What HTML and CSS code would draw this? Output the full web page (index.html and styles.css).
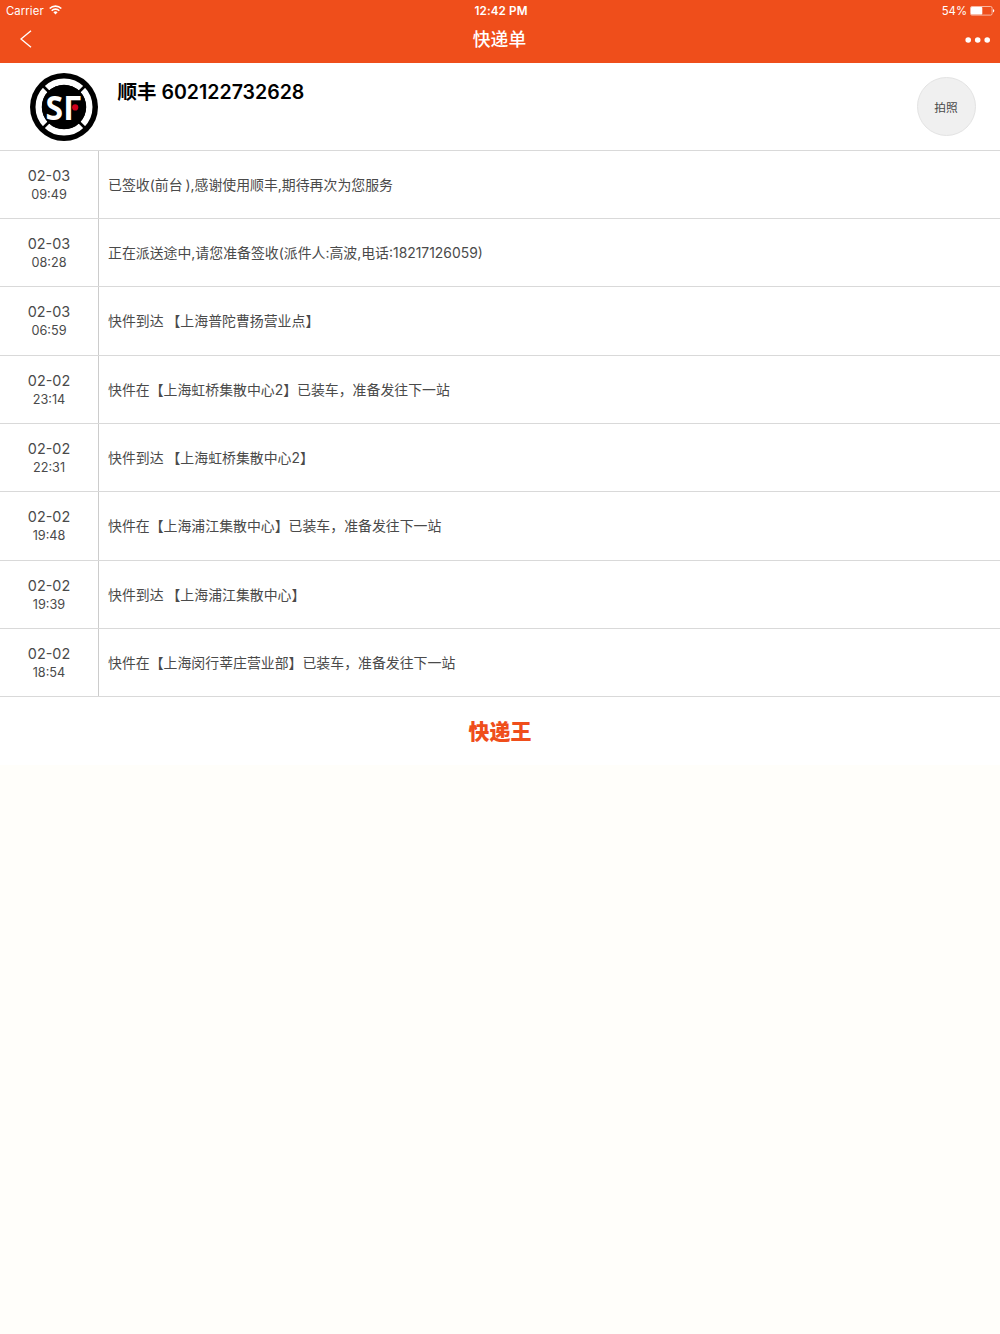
FILE: index.html
```html
<!DOCTYPE html>
<html lang="zh-CN">
<head>
<meta charset="utf-8">
<meta name="viewport" content="width=device-width,initial-scale=1.0">
<title>快递单</title>
<link rel="stylesheet" href="styles.css">
</head>
<body>
    <header class="header">
        <div class="status">
            <div class="carrier">
                <span>Carrier</span>
                <svg class="wifi" width="13" height="10" viewBox="0 0 13 10" fill="none" stroke="#fff" stroke-width="1.6">
                    <path d="M.7 3.5a8.2 8.2 0 0 1 11.6 0M2.7 5.7a5.4 5.4 0 0 1 7.6 0"/>
                    <path d="M6.5 9.4 4.4 7.3a3 3 0 0 1 4.2 0z" fill="#fff" stroke="none"/>
                </svg>
            </div>
            <div class="clock">12:42 PM</div>
            <div class="power">
                <span>54%</span>
                <svg width="25" height="10" viewBox="0 0 25 10">
                    <rect x=".5" y=".5" width="21.6" height="8.6" rx="1.5" fill="none" stroke="#fff" stroke-opacity=".75" stroke-width=".8"/>
                    <rect x="1" y="1" width="11.3" height="7.6" rx=".8" fill="#fff"/>
                    <path d="M23 3v3.6q1.3-.5 1.3-1.8T23 3z" fill="#fff"/>
                </svg>
            </div>
        </div>
        <nav class="nav">
            <a class="back" href="#">
                <svg width="12" height="18" viewBox="0 0 12 18" fill="none" stroke="#fff" stroke-width="1.4">
                    <path d="M11 .8 1 9l10 8.2"/>
                </svg>
            </a>
            <h1>快递单</h1>
            <a class="more" href="#">
                <svg width="26" height="6" viewBox="0 0 26 6" fill="#fff">
                    <circle cx="3.2" cy="3" r="2.8"/>
                    <circle cx="12.7" cy="3" r="2.8"/>
                    <circle cx="22.2" cy="3" r="2.8"/>
                </svg>
            </a>
        </nav>
    </header>

    <div class="main">
        <div class="express">
            <svg class="logo" width="68" height="68" viewBox="0 0 68 68">
                <circle cx="34" cy="34" r="34" fill="#000"/>
                <circle cx="34" cy="34" r="25.3" fill="none" stroke="#fff" stroke-width="6.4"/>
                <path d="M12 12l44 44M56 12 12 56" stroke="#000" stroke-width="2.6"/>
                <circle cx="34" cy="34" r="22.2" fill="#000"/>
                <text class="logo-text" x="15.6" y="46.6" textLength="35.4" lengthAdjust="spacingAndGlyphs">SΓ</text>
                <circle cx="45.2" cy="34.4" r="3.1" fill="#d0021b"/>
            </svg>
            <h2>顺丰 602122732628</h2>
            <button class="photo">拍照</button>
        </div>

        <ul class="track">
            <li><div class="time"><b>02-03</b><span>09:49</span></div><p>已签收(前台 ),感谢使用顺丰,期待再次为您服务</p></li>
            <li><div class="time"><b>02-03</b><span>08:28</span></div><p>正在派送途中,请您准备签收(派件人:高波,电话:18217126059)</p></li>
            <li><div class="time"><b>02-03</b><span>06:59</span></div><p>快件到达 【上海普陀曹扬营业点】</p></li>
            <li><div class="time"><b>02-02</b><span>23:14</span></div><p>快件在【上海虹桥集散中心2】已装车，准备发往下一站</p></li>
            <li><div class="time"><b>02-02</b><span>22:31</span></div><p>快件到达 【上海虹桥集散中心2】</p></li>
            <li><div class="time"><b>02-02</b><span>19:48</span></div><p>快件在【上海浦江集散中心】已装车，准备发往下一站</p></li>
            <li><div class="time"><b>02-02</b><span>19:39</span></div><p>快件到达 【上海浦江集散中心】</p></li>
            <li><div class="time"><b>02-02</b><span>18:54</span></div><p>快件在【上海闵行莘庄营业部】已装车，准备发往下一站</p></li>
        </ul>

        <div class="brand">快递王</div>
    </div>
</body>
</html>
```

FILE: styles.css
```css
* {
    box-sizing: border-box;
    margin: 0;
    padding: 0;
}
body {
    background-color: #fffefa;
    font-family: Inter, "Noto Sans CJK SC", sans-serif;
    color: #4a4a4a;
}
.header {
    height: 62.5px;
    background-color: #ef4e1b;
    color: #fff;
}
.status {
    display: grid;
    grid-template-columns: 1fr auto 1fr;
    align-items: center;
    height: 20px;
    padding: 0 5px 0 6px;
    font-size: 11.3px;
    line-height: 22px;
}
.carrier, .power {
    display: flex;
    align-items: center;
    gap: 5px;
}
.carrier {
    letter-spacing: .1px;
}
.wifi {
    margin-bottom: 2px;
}
.power {
    justify-content: flex-end;
    gap: 3px;
}
.power svg {
    margin-bottom: 1px;
}
.clock {
    padding-left: 1px;
    font-size: 11.7px;
    font-weight: 600;
    letter-spacing: .1px;
}
.nav {
    display: grid;
    grid-template-columns: 1fr auto 1fr;
    align-items: center;
    height: 38px;
    padding: 0 9px 0 20px;
}
.nav h1 {
    padding-right: 12px;
    font-size: 17.8px;
    font-weight: 500;
    line-height: 40px;
}
.back, .more {
    display: flex;
}
.back {
    padding-bottom: 3px;
}
.more {
    justify-content: flex-end;
    padding-bottom: 1px;
}
.main {
    height: 702.5px;
    background-color: #fff;
}
.express {
    display: flex;
    height: 88px;
    padding: 10px 24.5px 0 29.5px;
    border-bottom: 1px solid #d9d9d9;
}
.logo-text {
    font-family: "Open Sans", sans-serif;
    font-size: 34px;
    font-weight: 700;
    fill: #fff;
}
.express h2 {
    flex: 1;
    margin-left: 20px;
    color: #000;
    font-size: 19.55px;
    font-weight: 600;
    line-height: 39px;
}
.photo {
    width: 59px;
    height: 59px;
    margin-top: 4px;
    border: 1px solid #e3e3e3;
    border-radius: 50%;
    background-color: #f0f0f0;
    color: #4a4a4a;
    font-family: inherit;
    font-size: 11.7px;
}
.track {
    list-style: none;
}
.track li {
    display: flex;
    height: 68.36px;
    border-bottom: 1px solid #d9d9d9;
}
.time {
    display: flex;
    flex-direction: column;
    justify-content: center;
    width: 99px;
    padding-top: 1px;
    border-right: 1px solid #ccc;
    text-align: center;
}
.time b {
    font-size: 14.4px;
    font-weight: 400;
    line-height: 20px;
}
.time span {
    font-size: 12.7px;
    line-height: 18px;
}
.track p {
    padding-left: 9px;
    font-size: 13.9px;
    line-height: 69px;
    word-spacing: -1px;
}
.brand {
    height: 68px;
    color: #ef4e1b;
    font-size: 21px;
    font-weight: 900;
    line-height: 69px;
    text-align: center;
}
```
